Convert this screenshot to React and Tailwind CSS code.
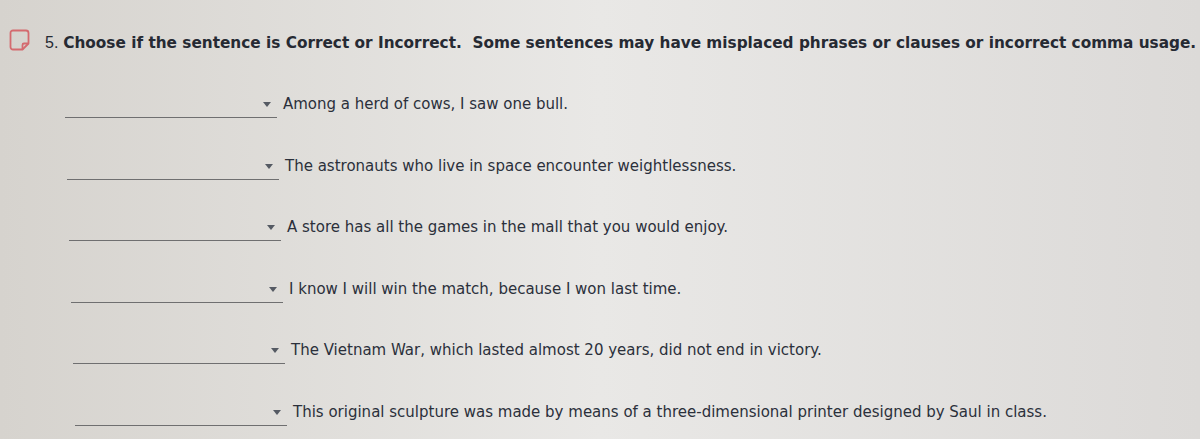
import React from 'react'

const rows = [
  { text: 'Among a herd of cows, I saw one bull.', shift: 'pl-[65px]' },
  { text: 'The astronauts who live in space encounter weightlessness.', shift: 'pl-[67px]' },
  { text: 'A store has all the games in the mall that you would enjoy.', shift: 'pl-[69px]' },
  { text: 'I know I will win the match, because I won last time.', shift: 'pl-[71px]' },
  { text: 'The Vietnam War, which lasted almost 20 years, did not end in victory.', shift: 'pl-[73px]' },
  { text: 'This original sculpture was made by means of a three-dimensional printer designed by Saul in class.', shift: 'pl-[75px]' },
]

const NoteIcon = () => (
  <svg width="22" height="24" viewBox="0 0 22 24" fill="none">
    <path
      d="M4 2.5h13a2.5 2.5 0 0 1 2.5 2.5v10.5l-6 6H4A2.5 2.5 0 0 1 1.5 19V5A2.5 2.5 0 0 1 4 2.5z"
      stroke="#d46a6f"
      strokeWidth="1.8"
      strokeLinejoin="round"
    />
    <path d="M19.5 15.5h-4.5a1.5 1.5 0 0 0-1.5 1.5v4.5" stroke="#d46a6f" strokeWidth="1.8" />
  </svg>
)

const Row = ({ text, shift }) => (
  <div className={`flex items-start h-[61.5px] ${shift}`}>
    <div className="w-[212px] h-[24px] border-b border-[#6f6f70] flex justify-end items-start pt-[8px] pr-[6px]">
      <span className="block w-0 h-0 border-l-[4px] border-r-[4px] border-t-[5px] border-l-transparent border-r-transparent border-t-[#555a63]" />
    </div>
    <span className="ml-[6px] text-[15px] leading-[20px] text-[#2b303b]">{text}</span>
  </div>
)

export default function App() {
  return (
    <div className="w-[1200px] h-[439px] overflow-hidden bg-gradient-to-r from-[#d6d3ce] via-[#e9e8e6] to-[#dcdad8] font-['DejaVu_Sans',Verdana,sans-serif]">
      <div className="flex items-start pl-[9px] pt-[28px] h-[70px]">
        <NoteIcon />
        <div className="ml-[14px] mt-[5px] text-[15.3px] leading-[20px] text-[#262a33] whitespace-nowrap">
          <span className="font-['Liberation_Sans',Arial,sans-serif] text-[16px]">5.</span>{' '}
          <span className="font-bold">
            Choose if the sentence is Correct or Incorrect.&nbsp; Some sentences may have misplaced phrases or clauses or incorrect comma usage.
          </span>
        </div>
      </div>
      <div className="flex flex-col pt-[24px]">
        {rows.map((r, i) => (
          <Row key={i} text={r.text} shift={r.shift} />
        ))}
      </div>
    </div>
  )
}
